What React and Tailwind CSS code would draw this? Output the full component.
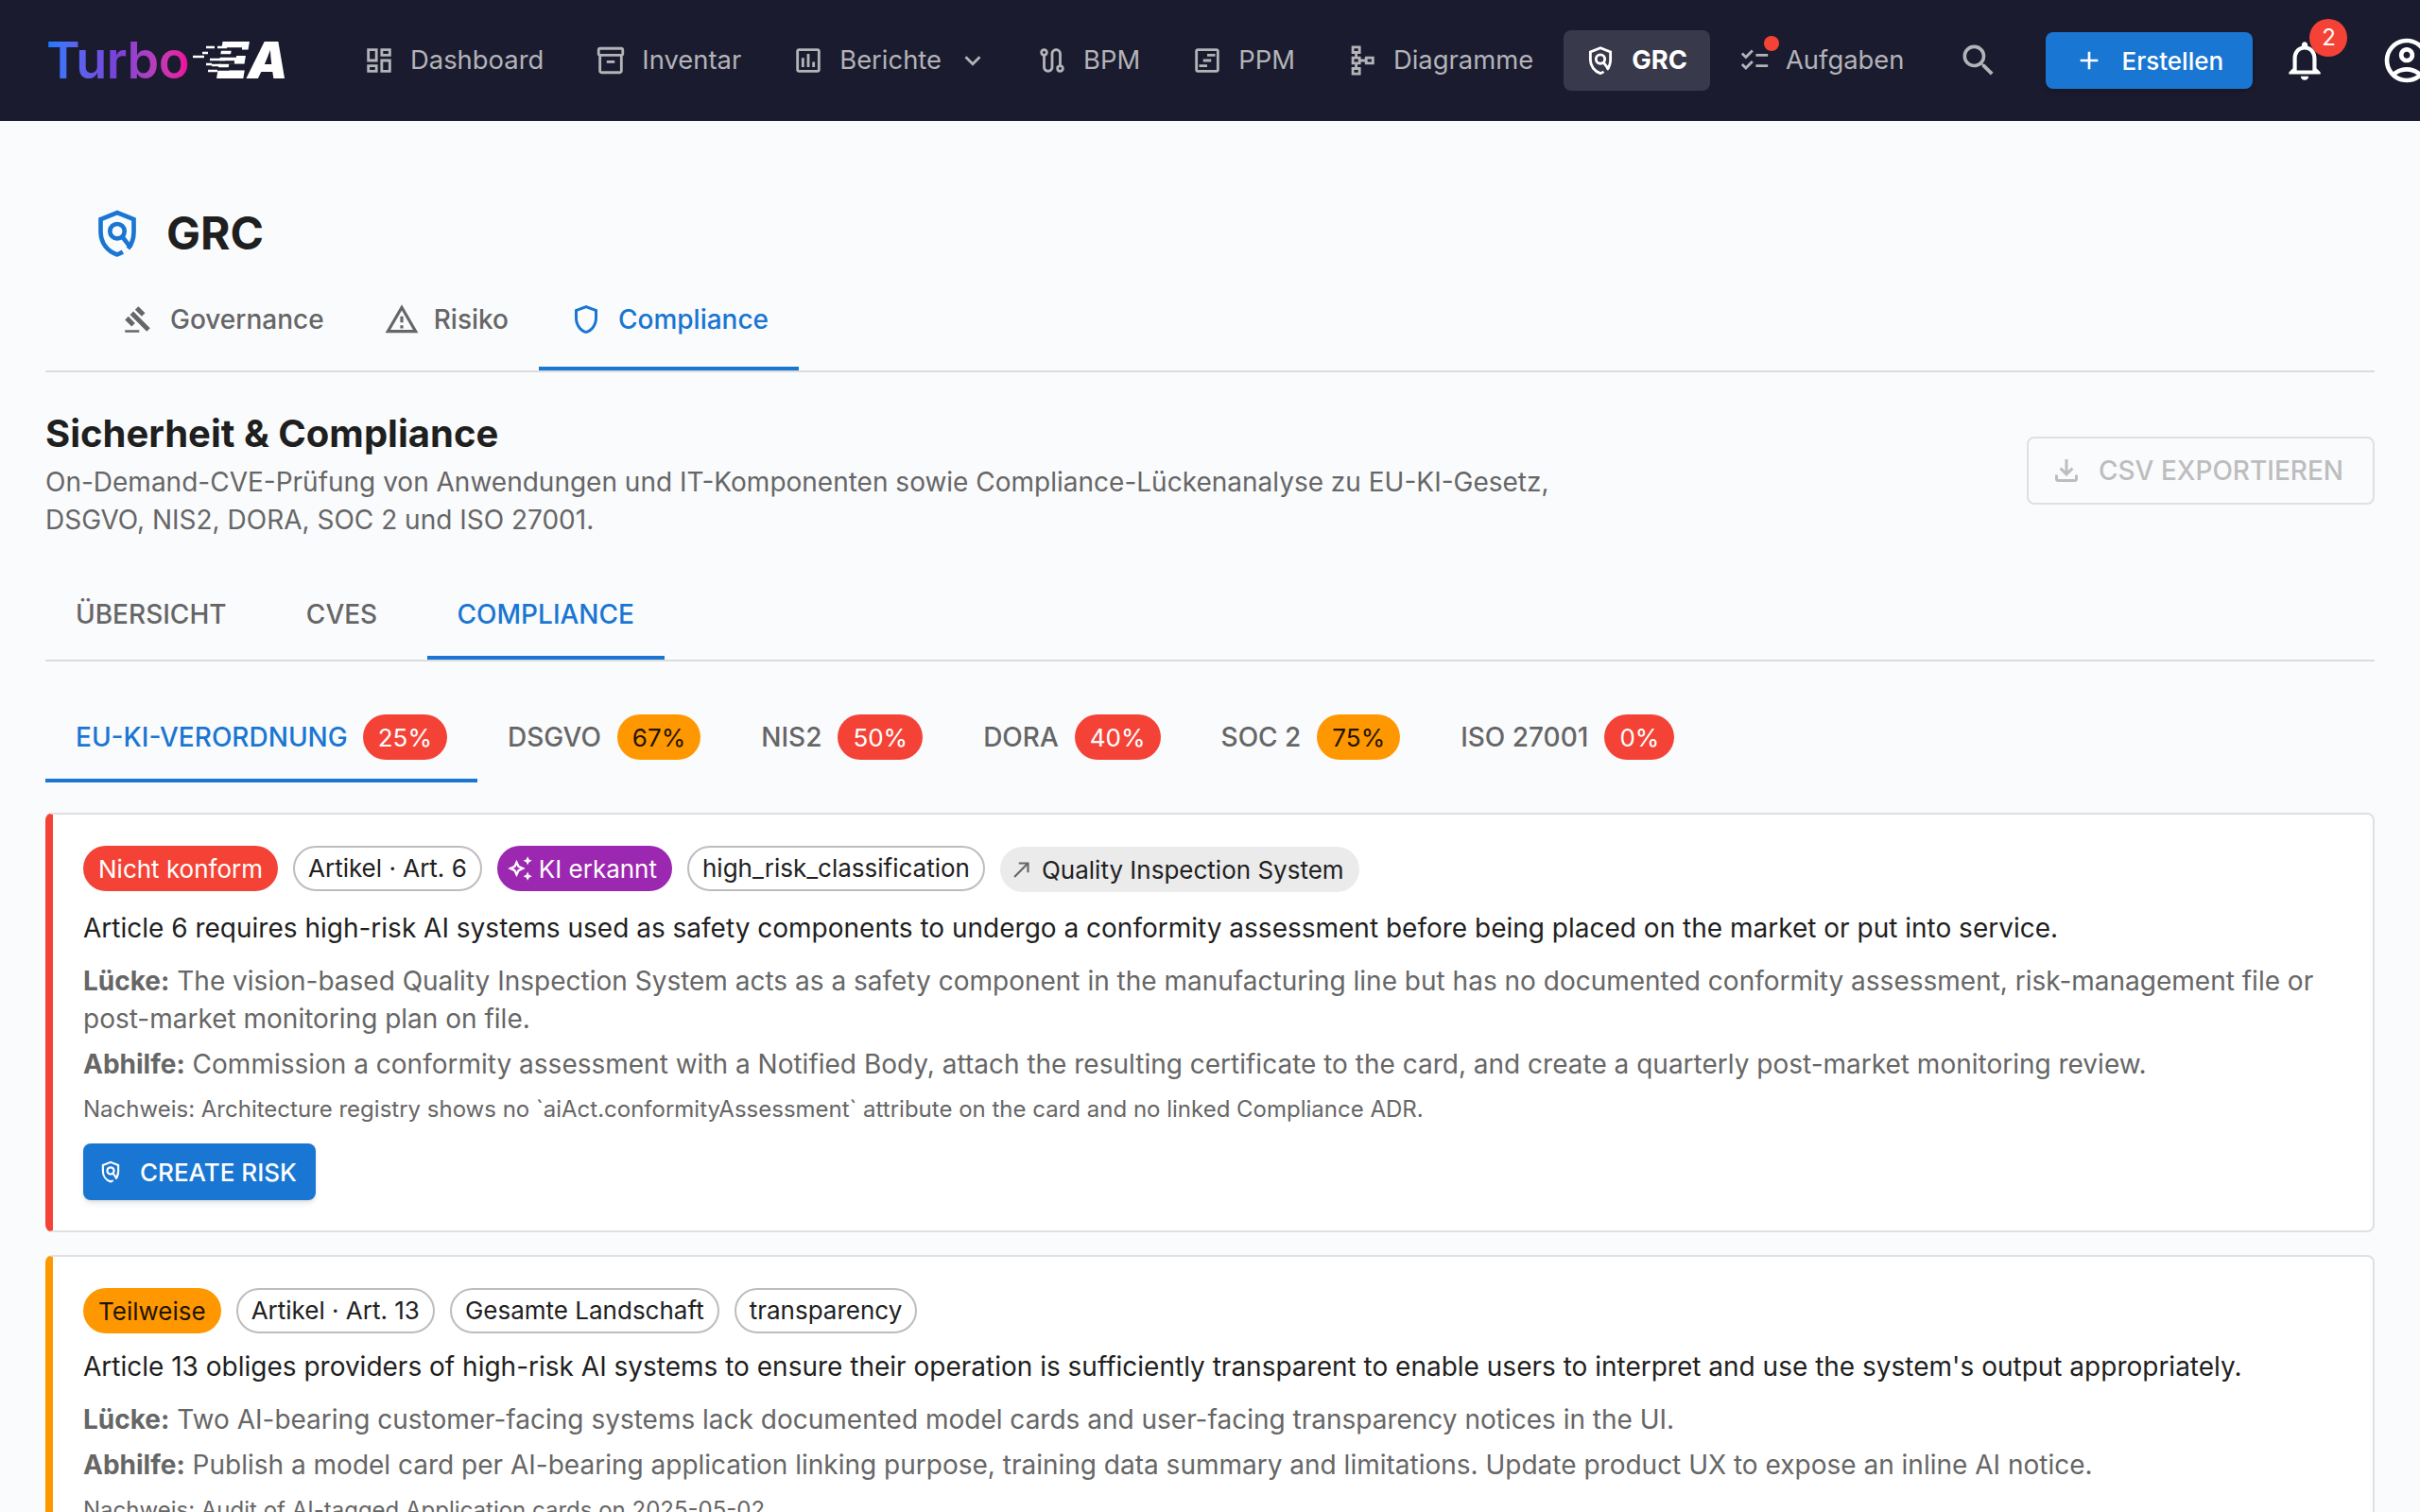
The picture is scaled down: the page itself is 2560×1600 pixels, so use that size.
import {
  MdOutlineDashboard,
  MdOutlineInventory2,
  MdOutlineAssessment,
  MdOutlineRoute,
  MdOutlineViewTimeline,
  MdOutlineSchema,
  MdOutlineChecklist,
  MdOutlineSearch,
  MdAdd,
  MdOutlineNotifications,
  MdOutlineAccountCircle,
  MdOutlineGavel,
  MdOutlineWarningAmber,
  MdOutlineShield,
  MdOutlineFileDownload,
  MdOutlineAutoAwesome,
  MdNorthEast,
  MdKeyboardArrowDown,
} from 'react-icons/md';

// Shield with a magnifier, the chamfered shape the package does not have
const PolicyIcon = ({ className }) => (
  <svg viewBox="0 0 24 24" fill="none" stroke="currentColor" strokeWidth="2" className={className}>
    <path d="M16.9 18.9c1.6-1.9 2.6-4.5 2.6-7.4V5.6L12 2.6 4.5 5.6v5.9c0 4.6 3 8.7 7.5 10.1.9-.3 1.7-.7 2.5-1.2" />
    <circle cx="12" cy="11" r="3.3" />
    <path d="M14.3 13.5l3.9 5.1" />
  </svg>
);

const navItems = [
  { label: 'Dashboard', icon: MdOutlineDashboard },
  { label: 'Inventar', icon: MdOutlineInventory2 },
  { label: 'Berichte', icon: MdOutlineAssessment, caret: true },
  { label: 'BPM', icon: MdOutlineRoute },
  { label: 'PPM', icon: MdOutlineViewTimeline },
  { label: 'Diagramme', icon: MdOutlineSchema },
  { label: 'GRC', icon: PolicyIcon, active: true },
  { label: 'Aufgaben', icon: MdOutlineChecklist, dot: true },
];

const frameworks = [
  { label: 'EU-KI-VERORDNUNG', pct: '25%', level: 'red', active: true },
  { label: 'DSGVO', pct: '67%', level: 'orange' },
  { label: 'NIS2', pct: '50%', level: 'red' },
  { label: 'DORA', pct: '40%', level: 'red' },
  { label: 'SOC 2', pct: '75%', level: 'orange' },
  { label: 'ISO 27001', pct: '0%', level: 'red' },
];

const Logo = () => (
  <div className="flex items-center h-[64px] w-[256px] shrink-0">
    <span className="text-[54px] leading-[64px] font-semibold tracking-[-0.5px] bg-gradient-to-r from-[#0a7cff] via-[#7a40d8] to-[#f0009c] bg-clip-text text-transparent">
      Turbo
    </span>
    <span className="relative ml-[4px] h-[64px] w-[102px]">
      <span className="absolute left-[25px] top-0 text-[54px] leading-[64px] font-black italic text-white tracking-[-1px]">
        EA
      </span>
      <svg viewBox="0 0 102 64" className="absolute inset-0 w-[102px] h-[64px]">
        <g stroke="#1a1b2e" strokeWidth="3.5">
          <path d="M22 20h30M16 27h30M20 34h24M18 41h20" />
        </g>
        <g stroke="#fff" strokeWidth="2.5">
          <path d="M14 18h9M26 18h10M10 24h6M18 31h16M0 28h12M20 37h10M14 36h6M16 43h10" />
        </g>
      </svg>
    </span>
  </div>
);

const NavItem = ({ item }) => {
  const Icon = item.icon;
  return (
    <div
      className={`relative flex items-center h-[64px] pl-[22px] pr-[24px] gap-[16px] rounded-[8px] shrink-0 ${
        item.active ? 'bg-[#38394a] text-white font-bold' : 'text-[#b3b3b8]'
      }`}
    >
      <Icon className="w-[34px] h-[34px] shrink-0" />
      <span className="mb-[2px] text-[27.4px] leading-[40px] whitespace-nowrap">{item.label}</span>
      {item.caret && <MdKeyboardArrowDown className="w-[34px] h-[34px] shrink-0 -mr-[4px]" />}
      {item.dot && (
        <span className="absolute left-[49px] top-[6px] w-[16px] h-[16px] rounded-full bg-[#f44336]" />
      )}
    </div>
  );
};

const TopBar = () => (
  <header className="flex items-center h-[128px] bg-[#1a1b2e] pl-[49px] overflow-hidden shrink-0">
    <Logo />
    <nav className="flex items-center gap-[8px] ml-[57px]">
      {navItems.map((item) => (
        <NavItem key={item.label} item={item} />
      ))}
    </nav>
    <MdOutlineSearch className="w-[44px] h-[44px] text-[#b3b3b8] ml-[33px] shrink-0" />
    <button className="flex items-center h-[60px] w-[219px] ml-[49px] pl-[30px] gap-[18px] rounded-[8px] bg-[#1976d2] text-white text-[26px] font-medium shrink-0 shadow-md">
      <MdAdd className="w-[32px] h-[32px] shrink-0" />
      <span>Erstellen</span>
    </button>
    <div className="relative ml-[30px] w-[50px] h-[50px] shrink-0">
      <MdOutlineNotifications className="w-[50px] h-[50px] text-white" />
      <span className="absolute left-[30px] top-[-19px] w-[40px] h-[40px] rounded-full bg-[#f44336] text-white text-[24px] flex items-center justify-center">
        2
      </span>
    </div>
    <MdOutlineAccountCircle className="w-[56px] h-[56px] text-white ml-[55px] shrink-0" />
  </header>
);

const Tab = ({ label, icon: Icon, iconClass, active }) => (
  <div
    className={`flex items-center h-full pt-[4px] px-[32px] gap-[16px] border-b-4 text-[28px] font-medium whitespace-nowrap ${
      active ? 'border-[#1976d2] text-[#1976d2]' : 'border-transparent text-[#666666]'
    }`}
  >
    <span className="flex items-center justify-center w-[36px] h-[36px] shrink-0">
      <Icon className={iconClass} />
    </span>
    <span>{label}</span>
  </div>
);

const TextTab = ({ label, active }) => (
  <div
    className={`flex items-center justify-center h-full pt-[4px] min-w-[180px] px-[32px] border-b-4 text-[28px] font-medium whitespace-nowrap ${
      active ? 'border-[#1976d2] text-[#1976d2]' : 'border-transparent text-[#666666]'
    }`}
  >
    {label}
  </div>
);

const FrameworkTab = ({ item }) => (
  <div
    className={`flex items-center h-full pt-[4px] px-[32px] border-b-4 text-[28px] font-medium whitespace-nowrap ${
      item.active ? 'gap-[16px] border-[#1976d2] text-[#1976d2]' : 'gap-[17px] border-transparent text-[#666666]'
    }`}
  >
    <span>{item.label}</span>
    <span
      className={`flex items-center h-[48px] px-[16px] rounded-full text-[26px] font-normal ${
        item.level === 'red' ? 'bg-[#f44336] text-white' : 'bg-[#ff9800] text-[#1f1400]'
      }`}
    >
      {item.pct}
    </span>
  </div>
);

const Chip = ({ children }) => (
  <span className="flex items-center h-[48px] px-[14px] rounded-full border-2 border-[#bdbdbd] text-[26px] text-[#212121] whitespace-nowrap">
    <span className="mb-[2px]">{children}</span>
  </span>
);

const Finding = ({ accent, chips, title, titleGap, gap, fix, proof, action }) => (
  <div className={`bg-white rounded-[8px] border-2 border-[#e0e0e0] border-l-8 ${accent} pl-[32px] pr-[32px] pt-[33px] pb-[32px]`}>
    <div className="flex items-center gap-[16px] h-[48px]">{chips}</div>
    <p className={`${titleGap} text-[28px] leading-[40px] text-[#1f1f1f]`}>{title}</p>
    <p className="mt-[16px] text-[28px] leading-[40px] text-[#666666]">
      <b className="font-bold">Lücke:</b> {gap}
    </p>
    <p className="mt-[8px] text-[28px] leading-[40px] text-[#666666]">
      <b className="font-bold">Abhilfe:</b> {fix}
    </p>
    <p className="mt-[12px] text-[24px] leading-[32px] text-[#666666]">Nachweis: {proof}</p>
    {action && (
      <button className="mt-[20px] flex items-center h-[60px] pl-[16px] pr-[20px] gap-[18px] rounded-[8px] bg-[#1976d2] text-white text-[26px] font-medium shadow-md">
        <PolicyIcon className="w-[26px] h-[26px]" />
        CREATE RISK
      </button>
    )}
  </div>
);

export default function App() {
  return (
    <div className="flex flex-col w-[2560px] h-screen overflow-hidden bg-[#fafbfd] font-['Inter',sans-serif]">
      <TopBar />
      <main className="px-[48px] pt-[91px]">
        <div className="flex items-center h-[56px] ml-[48px] gap-[24px]">
          <PolicyIcon className="w-[56px] h-[56px] shrink-0 text-[#1976d2]" />
          <h1 className="text-[48px] leading-[56px] font-bold text-[#1f1f1f]">GRC</h1>
        </div>

        <div className="flex h-[110px] mt-[9px] pl-[48px] border-b-2 border-[#dcdcdc]">
          <Tab label="Governance" icon={MdOutlineGavel} iconClass="w-[30px] h-[30px] shrink-0" />
          <Tab label="Risiko" icon={MdOutlineWarningAmber} iconClass="w-[38px] h-[38px] shrink-0" />
          <Tab label="Compliance" icon={MdOutlineShield} iconClass="w-[36px] h-[36px] shrink-0" active />
        </div>

        <div className="flex items-center justify-between mt-[35px]">
          <div>
            <h2 className="text-[40px] leading-[60px] font-bold text-[#1f1f1f]">Sicherheit &amp; Compliance</h2>
            <p className="max-w-[1600px] mt-[1px] mb-[1px] text-[28px] leading-[40px] text-[#666666]">
              On-Demand-CVE-Prüfung von Anwendungen und IT-Komponenten sowie Compliance-Lückenanalyse zu EU-KI-Gesetz,
              DSGVO, NIS2, DORA, SOC 2 und ISO 27001.
            </p>
          </div>
          <button className="flex items-center h-[72px] w-[368px] mb-[4px] px-[22px] gap-[16px] rounded-[8px] border-2 border-[#dfe0e3] text-[#bdbdbd] text-[28px] font-medium whitespace-nowrap">
            <MdOutlineFileDownload className="w-[36px] h-[36px] shrink-0" />
            CSV EXPORTIEREN
          </button>
        </div>

        <div className="flex h-[98px] mt-[31px] border-b-2 border-[#dcdcdc]">
          <TextTab label="ÜBERSICHT" />
          <TextTab label="CVES" />
          <TextTab label="COMPLIANCE" active />
        </div>

        <div className="flex h-[96px] mt-[32px]">
          {frameworks.map((item) => (
            <FrameworkTab key={item.label} item={item} />
          ))}
        </div>

        <div className="flex flex-col gap-[24px] mt-[32px]">
          <Finding
            accent="border-l-[#f44336]"
            titleGap="mt-[19px]"
            chips={
              <>
                <span className="flex items-center h-[48px] px-[16px] rounded-full bg-[#f44336] text-white text-[26px] whitespace-nowrap">
                  Nicht konform
                </span>
                <Chip>Artikel · Art. 6</Chip>
                <span className="flex items-center h-[48px] pl-[10px] pr-[16px] gap-[6px] rounded-full bg-[#9c27b0] text-white text-[26px] whitespace-nowrap">
                  <MdOutlineAutoAwesome className="w-[28px] h-[28px]" />
                  KI erkannt
                </span>
                <Chip>high_risk_classification</Chip>
                <span className="flex items-center h-[48px] mt-[2px] pl-[10px] pr-[16px] gap-[8px] rounded-full bg-[#ebebeb] text-[#212121] text-[26px] whitespace-nowrap">
                  <MdNorthEast className="w-[26px] h-[26px] text-[#666666]" />
                  Quality Inspection System
                </span>
              </>
            }
            title="Article 6 requires high-risk AI systems used as safety components to undergo a conformity assessment before being placed on the market or put into service."
            gap="The vision-based Quality Inspection System acts as a safety component in the manufacturing line but has no documented conformity assessment, risk-management file or post-market monitoring plan on file."
            fix="Commission a conformity assessment with a Notified Body, attach the resulting certificate to the card, and create a quarterly post-market monitoring review."
            proof="Architecture registry shows no `aiAct.conformityAssessment` attribute on the card and no linked Compliance ADR."
            action
          />
          <Finding
            accent="border-l-[#ff9800]"
            titleGap="mt-[15px]"
            chips={
              <>
                <span className="flex items-center h-[48px] px-[16px] rounded-full bg-[#ff9800] text-[#1f1400] text-[26px] whitespace-nowrap">
                  Teilweise
                </span>
                <Chip>Artikel · Art. 13</Chip>
                <Chip>Gesamte Landschaft</Chip>
                <Chip>transparency</Chip>
              </>
            }
            title="Article 13 obliges providers of high-risk AI systems to ensure their operation is sufficiently transparent to enable users to interpret and use the system's output appropriately."
            gap="Two AI-bearing customer-facing systems lack documented model cards and user-facing transparency notices in the UI."
            fix="Publish a model card per AI-bearing application linking purpose, training data summary and limitations. Update product UX to expose an inline AI notice."
            proof="Audit of AI-tagged Application cards on 2025-05-02."
          />
        </div>
      </main>
    </div>
  );
}
